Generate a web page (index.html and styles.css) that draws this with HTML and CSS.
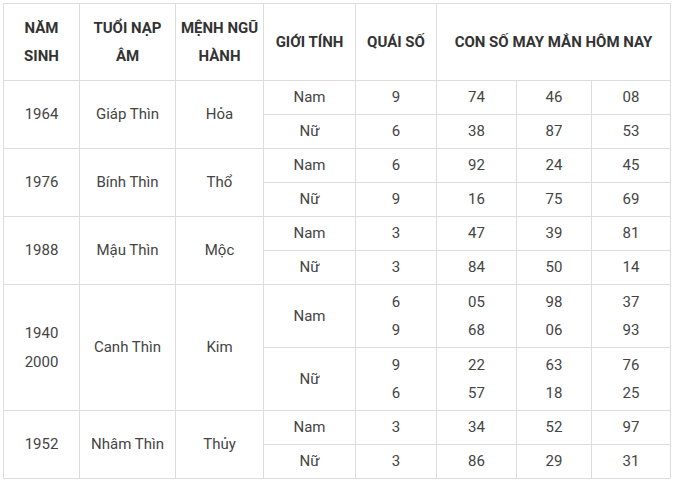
FILE: index.html
```html
<!DOCTYPE html>
<html lang="vi">
<head>
<meta charset="utf-8">
<link rel="stylesheet" href="styles.css">
</head>
<body>
<table class="lucky">
<colgroup>
<col class="c1"><col class="c2"><col class="c3"><col class="c4"><col class="c5"><col class="c6"><col class="c7"><col class="c8">
</colgroup>
<thead>
<tr class="head">
<th>NĂM<br>SINH</th>
<th>TUỔI NẠP<br>ÂM</th>
<th>MỆNH NGŨ<br>HÀNH</th>
<th>GIỚI TÍNH</th>
<th>QUÁI SỐ</th>
<th colspan="3">CON SỐ MAY MẮN HÔM NAY</th>
</tr>
</thead>
<tbody>
<tr class="r"><td rowspan="2">1964</td><td rowspan="2">Giáp Thìn</td><td rowspan="2">Hỏa</td><td>Nam</td><td>9</td><td>74</td><td>46</td><td>08</td></tr>
<tr class="r"><td>Nữ</td><td>6</td><td>38</td><td>87</td><td>53</td></tr>
<tr class="r"><td rowspan="2">1976</td><td rowspan="2">Bính Thìn</td><td rowspan="2">Thổ</td><td>Nam</td><td>6</td><td>92</td><td>24</td><td>45</td></tr>
<tr class="r"><td>Nữ</td><td>9</td><td>16</td><td>75</td><td>69</td></tr>
<tr class="r"><td rowspan="2">1988</td><td rowspan="2">Mậu Thìn</td><td rowspan="2">Mộc</td><td>Nam</td><td>3</td><td>47</td><td>39</td><td>81</td></tr>
<tr class="r"><td>Nữ</td><td>3</td><td>84</td><td>50</td><td>14</td></tr>
<tr class="t"><td rowspan="2">1940<br>2000</td><td rowspan="2">Canh Thìn</td><td rowspan="2">Kim</td><td class="up">Nam</td><td>6<br>9</td><td>05<br>68</td><td>98<br>06</td><td>37<br>93</td></tr>
<tr class="t"><td class="down">Nữ</td><td>9<br>6</td><td>22<br>57</td><td>63<br>18</td><td>76<br>25</td></tr>
<tr class="r"><td rowspan="2">1952</td><td rowspan="2">Nhâm Thìn</td><td rowspan="2">Thủy</td><td>Nam</td><td>3</td><td>34</td><td>52</td><td>97</td></tr>
<tr class="r"><td>Nữ</td><td>3</td><td>86</td><td>29</td><td>31</td></tr>
</tbody>
</table>
</body>
</html>
```
FILE: styles.css
```css
html, body {
  margin: 0;
  padding: 0;
  background: #fff;
}
body {
  padding: 3px;
  font-family: Roboto, "Liberation Sans", sans-serif;
  font-size: 15px;
}
.lucky {
  border-collapse: collapse;
  table-layout: fixed;
  width: 668px;
}
.c1 { width: 76px; }
.c2 { width: 96px; }
.c3 { width: 88px; }
.c4 { width: 92px; }
.c5 { width: 81px; }
.c6 { width: 80px; }
.c7 { width: 75px; }
.c8 { width: 79px; }
.lucky th, .lucky td {
  border: 1px solid #ddd;
  text-align: center;
  vertical-align: middle;
  padding: 0 2px;
  line-height: 28.5px;
}
.lucky th {
  font-weight: 700;
  color: #333;
}
.lucky td {
  color: #444;
}
.head { height: 77px; }
.r { height: 34px; }
.t { height: 63px; }
.up { vertical-align: middle; }
.down { vertical-align: bottom; padding-bottom: 4px; }
```
